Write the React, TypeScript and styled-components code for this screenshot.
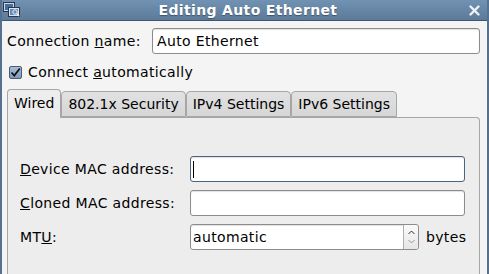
import React from 'react';
import styled, { createGlobalStyle } from 'styled-components';

const GlobalStyle = createGlobalStyle`
  html, body {
    margin: 0;
    padding: 0;
    overflow: hidden;
    background: #f4f4f4;
  }
  * { box-sizing: border-box; }
`;

const Window = styled.div`
  width: 489px;
  height: 274px;
  display: flex;
  flex-direction: column;
  font-family: "DejaVu Sans", "Liberation Sans", sans-serif;
  font-size: 14px;
  letter-spacing: 0.35px;
  color: #000;
  background: #f4f4f4;
  border-left: 2px solid #56718f;
  border-right: 2px solid #56718f;
  overflow: hidden;
`;

const TitleBar = styled.div`
  height: 21px;
  flex: none;
  display: flex;
  align-items: center;
  justify-content: space-between;
  padding: 0 9px 0 3px;
  margin: 0 -2px;
  background: linear-gradient(#7192b2, #5c7a99);
  border-bottom: 1px solid #3f5670;
  color: #fff;
`;

const Title = styled.div`
  font-weight: bold;
  font-size: 14px;
  letter-spacing: 0.35px;
  text-shadow: 0 1px 1px rgba(0, 0, 0, 0.35);
  padding-left: 6px;
`;

const Body = styled.div`
  flex: 1;
  display: flex;
  flex-direction: column;
  padding: 6px 7px 0 5px;
`;

const NameRow = styled.div`
  display: flex;
  align-items: center;
  height: 27px;
`;

const Label = styled.label<{ $width: number }>`
  width: ${(p) => p.$width}px;
  flex: none;
`;

const Field = styled.div<{ $focus?: boolean; $pad?: number }>`
  flex: 1;
  height: 26px;
  display: flex;
  align-items: center;
  padding: 0 ${(p) => p.$pad ?? 4}px;
  background: #fff;
  border: 1px solid ${(p) => (p.$focus ? '#4b6580' : '#8c8c8c')};
  border-radius: 3px;
  box-shadow: inset 0 1px 1px rgba(0, 0, 0, 0.12);
`;

const Caret = styled.span`
  width: 1px;
  height: 17px;
  margin-left: -2px;
  background: #000;
`;

const CheckRow = styled.div`
  display: flex;
  align-items: center;
  gap: 6px;
  height: 20px;
  margin: 8px 0 0 2px;
`;

const CheckBox = styled.span`
  width: 13px;
  height: 13px;
  border: 1px solid #4b5d73;
  border-radius: 2px;
  background: linear-gradient(#a9bed6, #7f9bbb);
  display: flex;
  align-items: center;
  justify-content: center;
`;

const Tabs = styled.div`
  display: flex;
  align-items: flex-end;
  margin-top: 7px;
  height: 28px;
  letter-spacing: 0;
`;

const Tab = styled.div<{ $active?: boolean }>`
  height: ${(p) => (p.$active ? 29 : 26)}px;
  padding: 0 6px ${(p) => (p.$active ? 3 : 0)}px;
  display: flex;
  align-items: center;
  border: 1px solid #a6a6a6;
  border-bottom: ${(p) => (p.$active ? 'none' : '1px solid #a6a6a6')};
  border-radius: 4px 4px 0 0;
  background: ${(p) => (p.$active ? '#ededed' : 'linear-gradient(#e2e2e2, #d6d6d6)')};
  margin-bottom: ${(p) => (p.$active ? -1 : 0)}px;
  position: relative;
  z-index: ${(p) => (p.$active ? 1 : 0)};
`;

const Panel = styled.div`
  flex: 1;
  background: #ededed;
  border: 1px solid #a6a6a6;
  border-bottom: none;
  border-radius: 0 4px 0 0;
  padding: 38px 14px 0 12px;
  display: flex;
  flex-direction: column;
  gap: 8px;
`;

const FormRow = styled.div`
  display: flex;
  align-items: center;
  height: 26px;
`;

const SpinField = styled(Field)`
  padding-right: 0;
  flex: none;
  width: 229px;
  justify-content: space-between;
`;

const SpinButton = styled.div`
  width: 15px;
  height: 24px;
  border-left: 1px solid #b0b0b0;
  border-radius: 0 3px 3px 0;
  background: linear-gradient(#fafafa, #e6e6e6);
  display: flex;
  align-items: center;
  justify-content: center;
`;

const Unit = styled.span`
  margin-left: 7px;
`;

const U = styled.span`
  text-decoration: underline;
`;

const AppIcon = () => (
  <svg width="18" height="16" viewBox="0 0 18 16">
    <rect x="0.5" y="0.5" width="11" height="9" fill="#c9d6e4" stroke="#334" />
    <rect x="2" y="2" width="8" height="6" fill="#3f6fa4" />
    <rect x="5.5" y="5.5" width="11" height="9" fill="#dbe4ee" stroke="#334" />
    <rect x="7" y="7" width="8" height="6" fill="#5d8cc2" />
    <circle cx="12" cy="10" r="2.2" fill="none" stroke="#eee" strokeWidth="1" />
    <line x1="13.6" y1="11.6" x2="16" y2="14" stroke="#eee" strokeWidth="1.4" />
  </svg>
);

const CloseIcon = () => (
  <svg width="11" height="11" viewBox="0 0 11 11">
    <path d="M1.5 1.5 L9.5 9.5 M9.5 1.5 L1.5 9.5" stroke="#eef2f6" strokeWidth="2.4" strokeLinecap="round" />
  </svg>
);

const CheckMark = () => (
  <svg width="11" height="11" viewBox="0 0 11 11">
    <path d="M1.5 5.5 L4.3 8.5 L9.8 1.5" fill="none" stroke="#111" strokeWidth="1.8" />
  </svg>
);

const SpinArrows = () => (
  <svg width="9" height="20" viewBox="0 0 9 20">
    <path d="M1.5 7 L4.5 4 L7.5 7" fill="none" stroke="#333" strokeWidth="1" />
    <path d="M1.5 13 L4.5 16 L7.5 13" fill="none" stroke="#999" strokeWidth="1" />
  </svg>
);

export default function App() {
  return (
    <>
      <GlobalStyle />
      <Window>
        <TitleBar>
          <AppIcon />
          <Title>Editing Auto Ethernet</Title>
          <CloseIcon />
        </TitleBar>
        <Body>
          <NameRow>
            <Label $width={145}>
              Connection <U>n</U>ame:
            </Label>
            <Field>Auto Ethernet</Field>
          </NameRow>
          <CheckRow>
            <CheckBox>
              <CheckMark />
            </CheckBox>
            <span>
              Connect <U>a</U>utomatically
            </span>
          </CheckRow>
          <Tabs>
            <Tab $active>Wired</Tab>
            <Tab>802.1x Security</Tab>
            <Tab>IPv4 Settings</Tab>
            <Tab>IPv6 Settings</Tab>
          </Tabs>
          <Panel>
            <FormRow>
              <Label $width={170}>
                <U>D</U>evice MAC address:
              </Label>
              <Field $focus>
                <Caret />
              </Field>
            </FormRow>
            <FormRow>
              <Label $width={170}>
                <U>C</U>loned MAC address:
              </Label>
              <Field />
            </FormRow>
            <FormRow>
              <Label $width={170}>
                MT<U>U</U>:
              </Label>
              <SpinField $pad={2}>
                automatic
                <SpinButton>
                  <SpinArrows />
                </SpinButton>
              </SpinField>
              <Unit>bytes</Unit>
            </FormRow>
          </Panel>
        </Body>
      </Window>
    </>
  );
}
